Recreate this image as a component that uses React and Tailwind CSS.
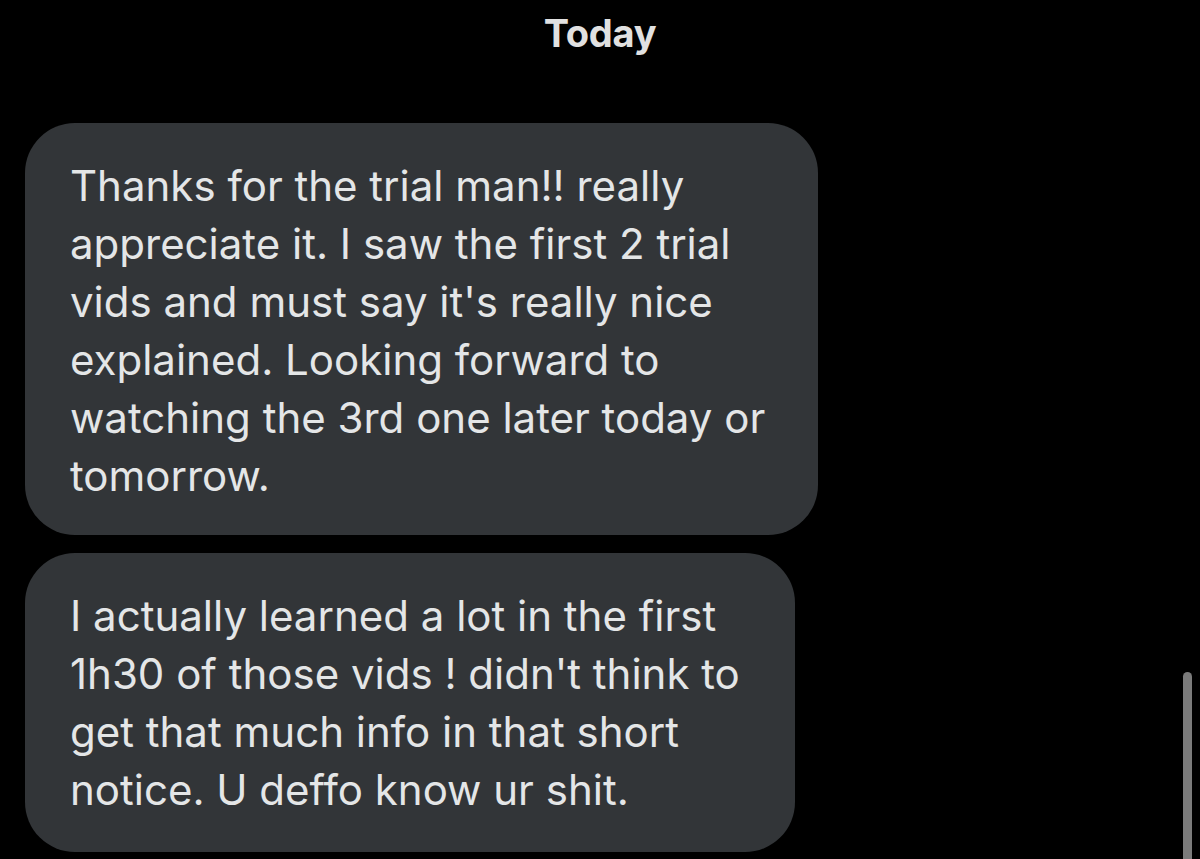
import React from 'react';

const messages = [
  {
    width: 'w-[793px]',
    pad: 'pb-[30px]',
    lines: [
      'Thanks for the trial man!! really',
      'appreciate it. I saw the first 2 trial',
      "vids and must say it's really nice",
      'explained. Looking forward to',
      'watching the 3rd one later today or',
      'tomorrow.',
    ],
  },
  {
    width: 'w-[770px]',
    pad: 'pb-[33px]',
    lines: [
      'I actually learned a lot in the first',
      "1h30 of those vids ! didn't think to",
      'get that much info in that short',
      'notice. U deffo know ur shit.',
    ],
  },
];

export default function App() {
  return (
    <div className="relative w-[1200px] h-[859px] overflow-hidden bg-black font-['Inter',sans-serif] text-[#e4e6e7]">
      {/* Date divider */}
      <div className="h-[66px] flex items-center justify-center">
        <span className="text-[38px] font-bold tracking-[-0.3px] text-[#e1e1e1]">Today</span>
      </div>

      {/* Message bubbles */}
      <div className="flex flex-col gap-[18px] pl-[25px] pt-[57px]">
        {messages.map((msg, i) => (
          <div
            key={i}
            className={`${msg.width} ${msg.pad} bg-[#323538] rounded-[50px] pl-[45px] pr-[40px] pt-[34px] text-[42px] leading-[58px]`}
          >
            {msg.lines.map((line, j) => (
              <div key={j} className="whitespace-nowrap">{line}</div>
            ))}
          </div>
        ))}
      </div>

      {/* Scroll indicator */}
      <div className="absolute left-[1183px] top-[672px] w-[9px] h-[200px] rounded-full bg-[#7b7b7b]" />
    </div>
  );
}
